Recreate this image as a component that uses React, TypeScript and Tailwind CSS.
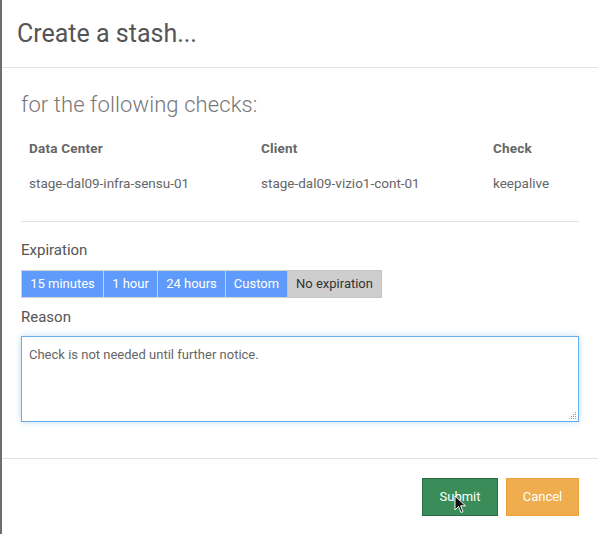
import React from "react";

export default function App() {
  const btns = [
    { t: "15 minutes", w: "w-[83px]" },
    { t: "1 hour", w: "w-[55px]" },
    { t: "24 hours", w: "w-[69px]" },
    { t: "Custom", w: "w-[63px]" },
  ];
  return (
    <div className="w-[598px] h-[534px] bg-white flex border-l-[2px] border-[#6e6e6e] relative overflow-hidden" style={{ fontFamily: "Roboto, 'Liberation Sans', sans-serif" }}>
      <div className="flex-1 flex flex-col">
        <div className="h-[68px] border-b border-[#e3e3e3] flex items-center pl-[15px]">
          <h1 className="text-[25px] text-[#555] leading-none">Create a stash...</h1>
        </div>
        <div className="pl-[19px] pr-[19px]">
          <div className="h-[71px] flex items-center pt-[2px]">
            <h2 className="text-[22px] text-[#777] font-light leading-none tracking-[0.1px]">for the following checks:</h2>
          </div>
          <div className="grid grid-cols-[232px_232px_1fr] px-[8px] text-[13.5px] text-[#666]">
            <div className="h-[18px] font-bold leading-[18px] tracking-[0.2px]">Data Center</div>
            <div className="h-[18px] font-bold leading-[18px] tracking-[0.2px]">Client</div>
            <div className="h-[18px] font-bold leading-[18px] tracking-[0.2px]">Check</div>
            <div className="h-[34px] flex items-center pt-[18px]">stage-dal09-infra-sensu-01</div>
            <div className="h-[34px] flex items-center pt-[18px]">stage-dal09-vizio1-cont-01</div>
            <div className="h-[34px] flex items-center pt-[18px]">keepalive</div>
          </div>
          <div className="border-b border-[#e0e0e0] mt-[30px]" />
          <div className="text-[15px] text-[#555] mt-[19px] leading-[18px]">Expiration</div>
          <div className="flex mt-[11px] h-[28px] text-[13px]">
            {btns.map((b) => (
              <div key={b.t} className={`${b.w} bg-[#5f9bfa] text-white border border-[#d2d2d2] -ml-px first:ml-0 flex items-center justify-center`}>{b.t}</div>
            ))}
            <div className="w-[95px] -ml-px bg-[#cecece] text-[#333] border border-[#c4c4c4] flex items-center justify-center">No expiration</div>
          </div>
          <div className="text-[15px] text-[#555] mt-[10px] leading-[18px]">Reason</div>
          <div className="mt-[10px] h-[86px] border border-[#68adee] shadow-[0_0_6px_rgba(102,175,233,0.45)] relative px-[7px] pt-[8px] text-[13px] text-[#666]">
            Check is not needed until further notice.
            <svg className="absolute right-[1px] bottom-[1px]" width="8" height="8" viewBox="0 0 8 8">
              <g fill="#999">
                <rect x="6" y="0" width="1" height="1" />
                <rect x="4" y="2" width="1" height="1" />
                <rect x="6" y="2" width="1" height="1" />
                <rect x="2" y="4" width="1" height="1" />
                <rect x="4" y="4" width="1" height="1" />
                <rect x="6" y="4" width="1" height="1" />
                <rect x="0" y="6" width="1" height="1" />
                <rect x="2" y="6" width="1" height="1" />
                <rect x="4" y="6" width="1" height="1" />
                <rect x="6" y="6" width="1" height="1" />
              </g>
            </svg>
          </div>
        </div>
        <div className="border-b border-[#e3e3e3] mt-[36px]" />
        <div className="flex justify-end gap-[8px] pr-[19px] mt-[19px] text-[13px]">
          <div className="w-[76px] h-[38px] bg-[#3a8d59] border border-[#2b6e45] text-white flex items-center justify-center relative">
            Submit
            <svg className="absolute left-[31px] top-[16px]" width="13" height="20" viewBox="0 0 13 20">
              <path d="M1 1 L1 15 L4.5 11.5 L7 17.5 L9 16.6 L6.6 10.8 L11.5 10.8 Z" fill="#111" stroke="#fff" strokeWidth="1" />
            </svg>
          </div>
          <div className="w-[73px] h-[38px] bg-[#efad4e] border border-[#eba23a] text-white flex items-center justify-center">Cancel</div>
        </div>
      </div>
    </div>
  );
}
